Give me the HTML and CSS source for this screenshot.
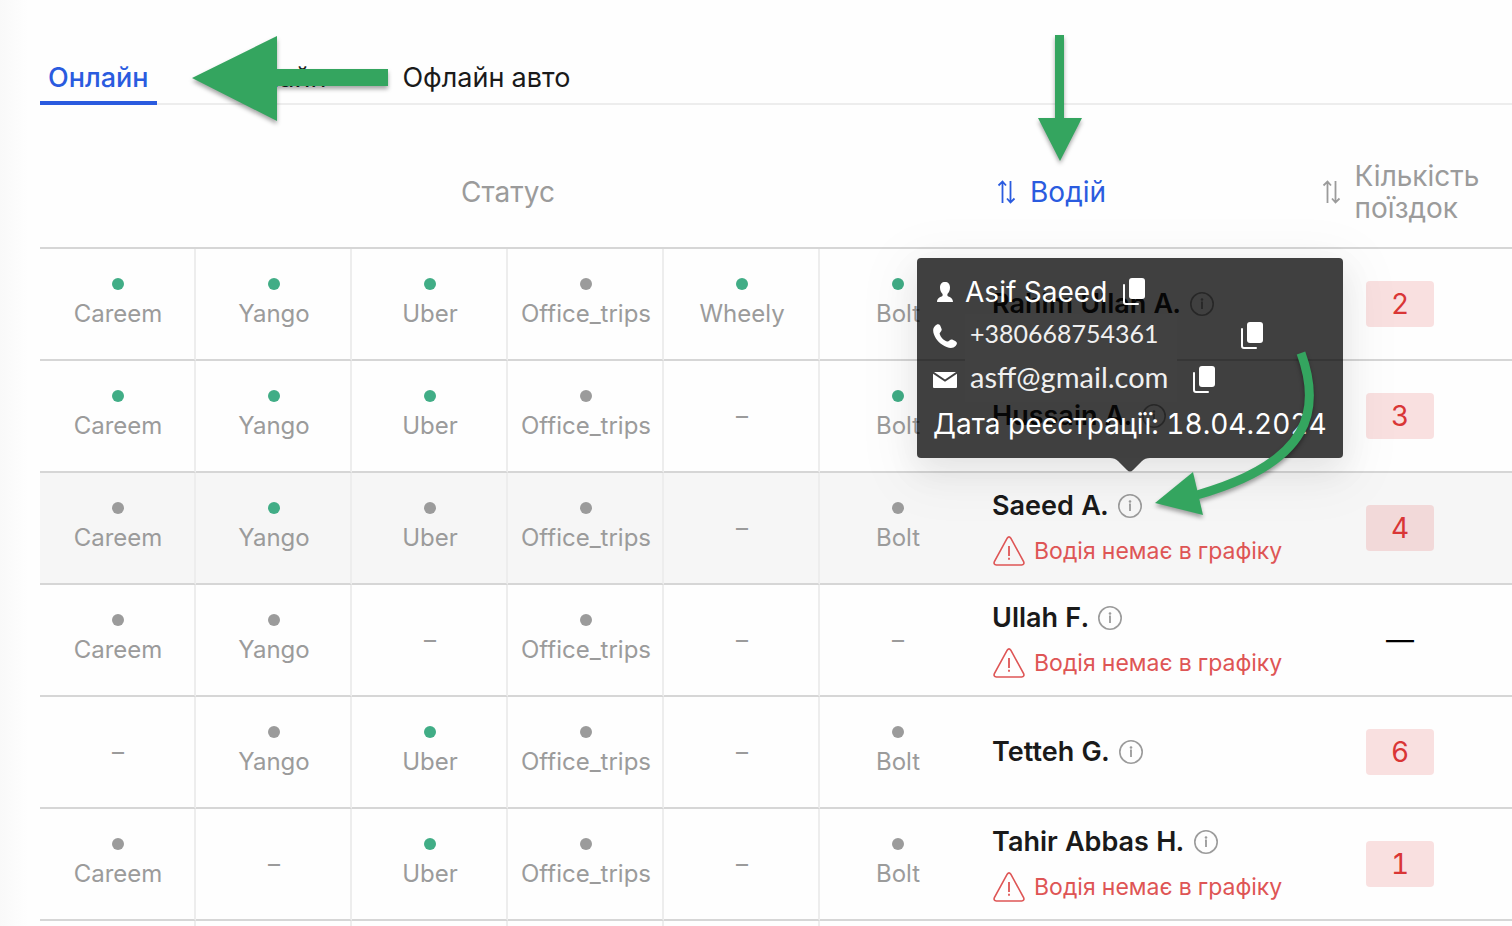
FILE: index.html
```
<!doctype html>
<html lang="uk">
<head>
    <meta charset="UTF-8">
    <meta name="viewport" content="width=device-width, initial-scale=1.0">
    <title>Водії онлайн</title>
    <link rel="stylesheet" href="styles.css">
    <script src="script.js" defer></script>
</head>
<body>
    <svg class="sprite" aria-hidden="true">
        <symbol id="i-sort" viewBox="0 0 20 24">
            <path d="M6.500 23V2M2.500 5.500L6.500 1.500l3.500 4M14.500 1v21M11 18.500l3.500 4 4-4" fill="none" stroke="currentColor" stroke-width="1.800"/>
        </symbol>
        <symbol id="i-info" viewBox="0 0 24 24">
            <circle cx="12" cy="12" r="11.200" fill="none" stroke="currentColor" stroke-width="1.600"/>
            <path d="M11 10.500h1V17" fill="none" stroke="currentColor" stroke-width="1.800"/>
            <circle cx="12" cy="7.500" r="1.300" fill="currentColor"/>
        </symbol>
        <symbol id="i-warn" viewBox="0 0 32 30">
            <path d="M14.200 2.200q1.800-2.600 3.600 0L30.600 25.500q1.200 3.200-2 3.500H3.400q-3.200-.3-2-3.500z" fill="none" stroke="currentColor" stroke-width="1.600"/>
            <path d="M16 10v10M16 21.800v2" fill="none" stroke="currentColor" stroke-width="1.800"/>
        </symbol>
        <symbol id="i-user" viewBox="0 0 24 24">
            <path d="M12 2c3.200 0 5 2 5 5.500 0 2.800-1 5-2.600 6.500v1.500c0 1.500 5.600 1 5.600 6.500H4c0-5.500 5.600-5 5.600-6.500V14C8 12.500 7 10.300 7 7.500 7 4 8.800 2 12 2z" fill="currentColor"/>
        </symbol>
        <symbol id="i-phone" viewBox="0 0 24 24">
            <path d="M2 2C4-.3 6-.3 7.200 1.500L8.600 5c.6 2-1.800 3-2 4.500.7 3.600 4.600 7.500 8 8 1.500 0 2.500-2.600 4.600-2l3.400 1.700c1.800 1 1.800 2.800 0 4.800-2 2-5 2.600-9 1C7.600 20.600 3 16 1 10.500-.4 6.500 0 4 2 2z" fill="currentColor"/>
        </symbol>
        <symbol id="i-mail" viewBox="0 0 24 16">
            <path d="M1 0h22L12 7.500zM0 1.800l12 8 12-8V15q0 1-1 1H1q-1 0-1-1z" fill="currentColor"/>
        </symbol>
        <symbol id="i-copy" viewBox="0 0 22 28">
            <rect x="6" y="0" width="16" height="21" rx="3" fill="currentColor"/>
            <path d="M1 7v17q0 2 2 2h12" fill="none" stroke="currentColor" stroke-width="2" stroke-linecap="round"/>
        </symbol>
    </svg>

    <main class="page">
        <nav class="tabs">
            <a class="tab active" href="#online">Онлайн</a>
            <a class="tab" href="#offline">Офлайн</a>
            <a class="tab" href="#offline-auto">Офлайн авто</a>
            <svg class="arrow arrow-tab" viewBox="0 0 196 86" aria-hidden="true">
                <path d="M0 42L85 0v33h111v17H85v35z"/>
            </svg>
        </nav>

        <table class="drivers">
            <colgroup>
                <col class="col-status" span="6">
                <col class="col-driver">
                <col>
            </colgroup>
            <thead>
                <tr>
                    <th colspan="6">Статус</th>
                    <th class="th-driver">
                        <button class="sort active"><svg><use href="#i-sort"/></svg>Водій</button>
                        <svg class="arrow arrow-driver" viewBox="0 0 44 126" aria-hidden="true">
                            <path d="M17 0h9v83h18L22 126 0 83h17z"/>
                        </svg>
                    </th>
                    <th>
                        <button class="sort"><svg><use href="#i-sort"/></svg><span>Кількість<br>поїздок</span></button>
                    </th>
                </tr>
            </thead>
            <tbody id="rows"></tbody>
        </table>
    </main>

    <template id="tooltip-template">
        <div class="tooltip" role="tooltip">
            <div class="line"><svg class="ico"><use href="#i-user"/></svg>Asif Saeed<button class="copy" aria-label="Копіювати ім'я"><svg><use href="#i-copy"/></svg></button></div>
            <div class="line"><svg class="ico"><use href="#i-phone"/></svg><span class="value phone">+380668754361</span><button class="copy" aria-label="Копіювати телефон"><svg><use href="#i-copy"/></svg></button></div>
            <div class="line"><svg class="ico"><use href="#i-mail"/></svg><span class="value mail">asff@gmail.com</span><button class="copy" aria-label="Копіювати пошту"><svg><use href="#i-copy"/></svg></button></div>
            <div class="line">Дата реєстрації: 18.04.2024</div>
            <svg class="pointer" viewBox="0 0 40 14" aria-hidden="true"><path d="M0 0h40q-5 0-8 3l-9 9q-3 3-6 0L8 3Q5 0 0 0z"/></svg>
            <svg class="arrow arrow-info" viewBox="0 0 170 170" aria-hidden="true">
                <path class="curve" d="M146 3C166 58 158 112 42 145"/>
                <path d="M0 153l38-31 10 43z"/>
            </svg>
        </div>
    </template>
</body>
</html>
```
FILE: styles.css
```
* {
    box-sizing: border-box;
}

body {
    margin: 0;
    height: 100vh;
    overflow: hidden;
    background: #fff linear-gradient(to right, #f9f9f9, #fefefe 28px);
    color: #1a1a1a;
    font-family: Inter, "Noto Sans", sans-serif;
    font-size: 28px;
    font-variant-numeric: tabular-nums;
}

button {
    border: none;
    padding: 0;
    background: none;
    color: inherit;
    font: inherit;
    cursor: pointer;
}

.sprite {
    display: none;
}

.page {
    padding: 48px 0 0 40px;
}

/* tabs */
.tabs {
    position: relative;
    display: flex;
    gap: 60px;
    height: 57px;
    box-shadow: inset 0 -2px #ededed;
}

.tab {
    padding: 12px 8px 0;
    line-height: 36px;
    color: #1a1a1a;
    font-size: 27px;
    text-decoration: none;
    white-space: nowrap;
}

.tab.active {
    color: #2a5bdf;
    font-weight: 500;
    border-bottom: 4px solid #2a5bdf;
}

/* table */
.drivers {
    width: 100%;
    margin-top: 32px;
    table-layout: fixed;
    border-spacing: 0;
}

.col-status {
    width: 156px;
}

.col-driver {
    width: 312px;
}

th {
    height: 112px;
    padding: 0;
    border-bottom: 2px solid #d6d6d6;
    color: #9b9b9b;
    font-weight: 400;
    line-height: 32px;
}

td {
    height: 112px;
    padding: 0;
    border-bottom: 2px solid #d6d6d6;
    text-align: center;
}

.th-driver {
    position: relative;
    padding-left: 20px;
}

.sort {
    display: flex;
    align-items: center;
    gap: 14px;
    margin: 0 auto;
    text-align: left;
}

.sort svg {
    width: 20px;
    height: 24px;
}

.sort.active {
    margin: 0;
    color: #2a5bdf;
}

.status {
    padding-left: 2px;
    border-right: 2px solid #ededed;
    color: #9b9b9b;
    font-size: 24px;
    line-height: 32px;
}

.status.last {
    padding-left: 0;
    border-right: none;
}

.dot {
    display: block;
    width: 12px;
    height: 12px;
    margin: 0 auto 8px;
    border-radius: 50%;
    background: #9b9b9b;
}

.on .dot {
    background: #41ad86;
}

.selected td {
    background: #f6f6f6;
}

.driver {
    padding-left: 16px;
    text-align: left;
}

.name {
    display: flex;
    align-items: center;
    gap: 10px;
    font-size: 27px;
    font-weight: 600;
    line-height: 34px;
    white-space: nowrap;
}

.info {
    display: flex;
    color: #9b9b9b;
}

.info svg {
    width: 24px;
    height: 24px;
}

.warning {
    display: flex;
    align-items: center;
    gap: 8px;
    margin-top: 12px;
    color: #de5555;
    font-size: 23px;
    line-height: 32px;
    white-space: nowrap;
}

.warning svg {
    width: 34px;
    height: 30px;
}

.badge {
    display: inline-block;
    width: 68px;
    border-radius: 4px;
    background: rgba(218, 44, 44, .14);
    color: #d93636;
    line-height: 46px;
    vertical-align: middle;
}

.none {
    color: #000;
}

/* tooltip over the info icon */
.anchor {
    position: relative;
    display: flex;
}

.tooltip {
    position: absolute;
    z-index: 2;
    bottom: calc(100% + 36px);
    left: 50%;
    width: 426px;
    height: 200px;
    padding: 12px 16px;
    transform: translateX(-50%);
    border-radius: 4px;
    background: rgba(0, 0, 0, .75);
    box-shadow: 0 12px 32px rgba(0, 0, 0, .08), 0 12px 56px 16px rgba(0, 0, 0, .04);
    color: #fff;
    font-size: 28px;
    font-weight: 400;
    line-height: 44px;
    white-space: nowrap;
}

.line {
    display: flex;
    align-items: center;
    height: 44px;
}

.tooltip .ico {
    width: 24px;
    height: 24px;
    margin-right: 8px;
}

.copy {
    display: flex;
    margin-left: 16px;
}

.copy svg {
    width: 22px;
    height: 28px;
}

.value {
    width: 212px;
    height: 44px;
    padding: 0 5px;
    background: #414141;
    color: #f0f0f0;
    font-family: Lato, "Noto Sans", sans-serif;
    line-height: 38px;
}

.phone {
    font-size: 25px;
}

.phone + .copy {
    margin-left: 64px;
}

.mail {
    font-size: 29px;
}

.pointer {
    position: absolute;
    top: 100%;
    left: 50%;
    width: 40px;
    height: 14px;
    transform: translateX(-50%);
    fill: #414141;
}

/* green pointers */
.arrow {
    position: absolute;
    overflow: visible;
    fill: #34a55f;
    filter: drop-shadow(0 3px 2px rgba(0, 0, 0, .35));
    pointer-events: none;
}

.arrow .curve {
    fill: none;
    stroke: #34a55f;
    stroke-width: 9;
}

.arrow-tab {
    top: -12px;
    left: 152px;
    width: 196px;
    height: 86px;
}

.arrow-driver {
    bottom: 86px;
    left: 62px;
    width: 44px;
    height: 126px;
}

.arrow-info {
    top: 92px;
    left: 238px;
    width: 170px;
    height: 170px;
}
```
FILE: script.js
```
const services = ["Careem", "Yango", "Uber", "Office_trips", "Wheely", "Bolt"];

// status: 1 - online, 0 - offline, "-" - no account
const drivers = [
    { status: "111011", name: "Rahim Ullah A.", trips: 2 },
    { status: "1110-1", name: "Hussain A.", trips: 3 },
    { status: "0100-0", name: "Saeed A.", trips: 4, warning: true, selected: true },
    { status: "00-0--", name: "Ullah F.", warning: true },
    { status: "-010-0", name: "Tetteh G.", trips: 6 },
    { status: "0-10-0", name: "Tahir Abbas H.", trips: 1, warning: true },
];

const rows = document.getElementById("rows");

for (const driver of drivers) {
    const row = document.createElement("tr");
    if (driver.selected) row.className = "selected";

    let html = "";
    services.forEach((service, i) => {
        const state = driver.status[i];
        const last = i === services.length - 1 ? " last" : "";
        if (state === "-") {
            html += `<td class="status${last}">–</td>`;
        } else {
            html += `<td class="status${last}${state === "1" ? " on" : ""}"><span class="dot"></span>${service}</td>`;
        }
    });

    html += `<td class="driver"><div class="name">${driver.name}
        <span class="anchor"><button class="info" aria-label="Інформація"><svg><use href="#i-info"/></svg></button></span></div>`;
    if (driver.warning) {
        html += `<div class="warning"><svg><use href="#i-warn"/></svg>Водія немає в графіку</div>`;
    }
    html += "</td>";
    html += driver.trips ? `<td><span class="badge">${driver.trips}</span></td>` : `<td class="none">—</td>`;

    row.innerHTML = html;
    if (driver.selected) {
        const tooltip = document.getElementById("tooltip-template").content.cloneNode(true);
        row.querySelector(".anchor").appendChild(tooltip);
    }
    rows.appendChild(row);
}

// empty row for the next driver
const empty = document.createElement("tr");
empty.innerHTML = '<td class="status"></td>'.repeat(5) + '<td class="status last"></td><td></td><td></td>';
rows.appendChild(empty);
```
